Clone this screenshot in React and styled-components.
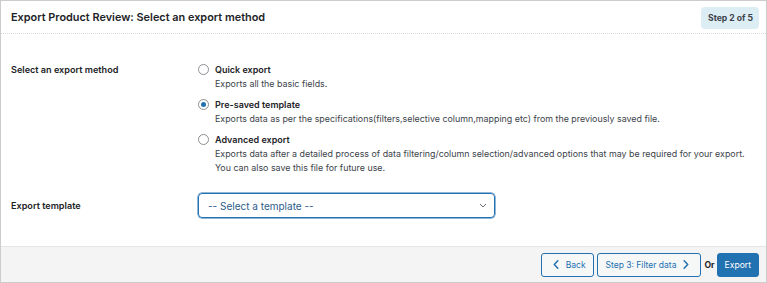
import React from 'react';
import styled, { createGlobalStyle } from 'styled-components';

const GlobalStyle = createGlobalStyle`
    html, body {
        margin: 0;
        padding: 0;
        background: #ffffff;
    }
    body {
        font-family: 'Inter', 'Noto Sans', sans-serif;
        color: #1d2327;
    }
`;

const methods = [
    {
        id: 'quick',
        title: 'Quick export',
        lines: ['Exports all the basic fields.'],
    },
    {
        id: 'template',
        title: 'Pre-saved template',
        lines: ['Exports data as per the specifications(filters,selective column,mapping etc) from the previously saved file.'],
    },
    {
        id: 'advanced',
        title: 'Advanced export',
        lines: [
            'Exports data after a detailed process of data filtering/column selection/advanced options that may be required for your export.',
            'You can also save this file for future use.',
        ],
    },
];

const Chevron = ({ dir }) => (
    <svg width="6" height="9" viewBox="0 0 6 9" fill="none">
        <path
            d={dir === 'left' ? 'M4.8 0.8 L1.3 4.5 L4.8 8.2' : 'M1.2 0.8 L4.7 4.5 L1.2 8.2'}
            stroke="currentColor"
            strokeWidth="1.5"
            strokeLinecap="round"
            strokeLinejoin="round"
        />
    </svg>
);

const App = () => {
    const selected = 'template';
    return (
        <>
            <GlobalStyle />
            <Panel>
                <Header>
                    <Title>Export Product Review: Select an export method</Title>
                    <StepBadge>Step 2 of 5</StepBadge>
                </Header>
                <Body>
                    <FormRow>
                        <RowLabel>Select an export method</RowLabel>
                        <Options>
                            {methods.map(m => (
                                <Option key={m.id}>
                                    <Radio $checked={m.id === selected} />
                                    <OptionText>
                                        <OptionTitle>{m.title}</OptionTitle>
                                        {m.lines.map((line, i) => (
                                            <OptionDesc key={i}>{line}</OptionDesc>
                                        ))}
                                    </OptionText>
                                </Option>
                            ))}
                        </Options>
                    </FormRow>
                    <FormRow $center>
                        <RowLabel>Export template</RowLabel>
                        <Select>
                            <span>-- Select a template --</span>
                            <SelectArrow viewBox="0 0 8 5">
                                <path d="M1 1 L4 4 L7 1" stroke="currentColor" strokeWidth="1" fill="none" />
                            </SelectArrow>
                        </Select>
                    </FormRow>
                </Body>
                <Footer>
                    <OutlineButton $pad="0 7px 0 11px">
                        <Chevron dir="left" />
                        Back
                    </OutlineButton>
                    <OutlineButton $pad="0 11px 0 8px">
                        Step 3: Filter data
                        <Chevron dir="right" />
                    </OutlineButton>
                    <OrText>Or</OrText>
                    <PrimaryButton>Export</PrimaryButton>
                </Footer>
            </Panel>
        </>
    );
};

export default App;

const Panel = styled.div`
    box-sizing: border-box;
    width: 767px;
    height: 283px;
    border: 1px solid #cccccc;
    display: flex;
    flex-direction: column;
    background: #ffffff;
`;

const Header = styled.div`
    display: flex;
    align-items: center;
    justify-content: space-between;
    height: 32px;
    padding: 0 7px 0 10px;
    border-bottom: 1px dotted #dcdcde;
`;

const Title = styled.h2`
    margin: 0;
    font-size: 10.9px;
    font-weight: 600;
    color: #1d2327;
`;

const StepBadge = styled.div`
    background: #dcedf4;
    color: #3c434a;
    font-size: 8.6px;
    font-weight: 700;
    line-height: 22px;
    padding: 0 6px 0 7px;
    border-radius: 4px;
    margin-top: 1px;
`;

const Body = styled.div`
    flex: 1;
    padding: 29px 10px 0 10px;
    display: flex;
    flex-direction: column;
    gap: 18px;
`;

const FormRow = styled.div`
    display: flex;
    align-items: ${p => (p.$center ? 'center' : 'flex-start')};
`;

const RowLabel = styled.div`
    width: 187px;
    flex-shrink: 0;
    font-size: 9.1px;
    font-weight: 600;
    line-height: 14px;
    color: #1d2327;
`;

const Options = styled.div`
    display: flex;
    flex-direction: column;
    gap: 7px;
`;

const Option = styled.div`
    display: flex;
    align-items: flex-start;
    gap: 6px;
`;

const Radio = styled.span`
    box-sizing: border-box;
    width: 11px;
    height: 11px;
    margin-top: 1px;
    border-radius: 50%;
    border: 1px solid #8c8f94;
    background: #fff;
    flex-shrink: 0;
    display: flex;
    align-items: center;
    justify-content: center;

    &::after {
        content: '';
        display: ${p => (p.$checked ? 'block' : 'none')};
        width: 5px;
        height: 5px;
        border-radius: 50%;
        background: #2271b1;
    }
`;

const OptionText = styled.div`
    display: flex;
    flex-direction: column;
`;

const OptionTitle = styled.div`
    font-size: 9px;
    font-weight: 600;
    line-height: 14px;
    color: #1d2327;
`;

const OptionDesc = styled.div`
    font-size: 8.9px;
    line-height: 14px;
    color: #3c434a;
`;

const Select = styled.div`
    box-sizing: border-box;
    width: 297px;
    height: 25px;
    border: 1px solid #2271b1;
    border-radius: 4px;
    display: flex;
    align-items: center;
    justify-content: space-between;
    padding: 0 7px 0 9px;
    font-size: 10px;
    color: #2c5d8a;
    box-shadow: 0 0 0 0.5px #2271b1;
`;

const SelectArrow = styled.svg`
    width: 8px;
    height: 5px;
    color: #6b7078;
`;

const Footer = styled.div`
    height: 36px;
    box-sizing: border-box;
    background: #f4f4f4;
    border-top: 1px solid #e6e6e6;
    display: flex;
    align-items: center;
    justify-content: flex-end;
    padding: 0 7px 0 0;
`;

const OutlineButton = styled.button`
    box-sizing: border-box;
    height: 24px;
    display: flex;
    align-items: center;
    gap: 7px;
    padding: ${p => p.$pad};
    background: #f6f7f7;
    border: 1px solid #2271b1;
    border-radius: 3px;
    color: #2271b1;
    font-family: 'Inter', 'Noto Sans', sans-serif;
    font-size: 8.5px;
    margin-left: 3px;
`;

const OrText = styled.span`
    font-size: 8.6px;
    font-weight: 700;
    color: #1d2327;
    margin: 0 2px 0 3px;
`;

const PrimaryButton = styled.button`
    box-sizing: border-box;
    height: 24px;
    padding: 0 7px;
    background: #2271b1;
    border: 1px solid #2271b1;
    border-radius: 3px;
    color: #ffffff;
    font-family: 'Inter', 'Noto Sans', sans-serif;
    font-size: 8.6px;
`;
